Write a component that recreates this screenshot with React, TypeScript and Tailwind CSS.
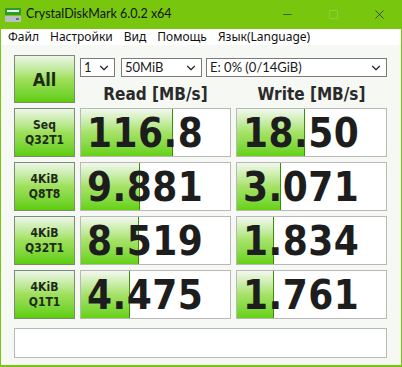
import { ChevronDown, Minus, Square, X } from 'lucide-react'

const rows = [
  { l1: 'Seq', l2: 'Q32T1', read: '116.8', rw: 92, write: '18.50', ww: 68 },
  { l1: '4KiB', l2: 'Q8T8', read: '9.881', rw: 59, write: '3.071', ww: 44 },
  { l1: '4KiB', l2: 'Q32T1', read: '8.519', rw: 58, write: '1.834', ww: 37 },
  { l1: '4KiB', l2: 'Q1T1', read: '4.475', rw: 49, write: '1.761', ww: 37 },
]

const ui = { fontFamily: 'Lato, "Noto Sans", sans-serif' }
const menu = { fontFamily: '"Noto Sans", sans-serif' }
const bold = { fontFamily: '"DejaVu Sans Condensed", "DejaVu Sans", sans-serif' }

function DriveIcon() {
  return (
    <svg width="16" height="16" viewBox="0 0 16 16">
      <rect x="0" y="1" width="16" height="7" fill="#2f9a2f" />
      <rect x="2" y="3" width="12" height="2" fill="#e8f5e0" />
      <rect x="0" y="9" width="16" height="6" fill="#b9bfc4" />
      <rect x="11" y="11" width="3" height="2" fill="#6a7075" />
    </svg>
  )
}

function Select({ value, w }: { value: string; w: string }) {
  return (
    <div className={`${w} h-[19px] bg-white border border-[#7a7a7a] flex items-center justify-between pl-[3px] pr-[3px] text-[13px] text-[#1a1a1a]`} style={ui}>
      <span>{value}</span>
      <ChevronDown size={14} strokeWidth={2} className="text-[#222]" />
    </div>
  )
}

function GreenButton({ children }: { children: React.ReactNode }) {
  return (
    <div className="h-full flex flex-col items-center justify-center border border-[#7d8a76] bg-linear-to-b from-[#eef6e8] via-[#9fe05a] to-[#5ccd00] text-[#1e2a18] font-bold leading-[15px]" style={bold}>
      {children}
    </div>
  )
}

function Cell({ value, width }: { value: string; width: number }) {
  return (
    <div className="relative h-full bg-white border border-[#b8b8b8] overflow-hidden">
      <div
        className="absolute left-0 top-0 bottom-0 border-r border-[#3d8d05] bg-linear-to-b from-[#f2f8ee] via-[#a6e266] to-[#64d20a]"
        style={{ width }}
      />
      <div className="relative h-full flex items-center pl-[6px] text-[40px] font-bold text-[#1d1d1d] tracking-[0.5px]" style={bold}>
        {value}
      </div>
    </div>
  )
}

export default function App() {
  return (
    <div className="w-[402px] h-[367px] bg-[#78c70e] flex flex-col">
      <div className="h-[29px] flex items-center">
        <div className="pl-[5px] pr-[5px]">
          <DriveIcon />
        </div>
        <span className="text-[12.5px] text-[#111]" style={ui}>CrystalDiskMark 6.0.2 x64</span>
        <div className="ml-auto flex items-center">
          <div className="w-[46px] flex justify-center"><Minus size={13} strokeWidth={1.2} className="text-[#222]" /></div>
          <div className="w-[46px] flex justify-center"><Square size={11} strokeWidth={1.2} className="text-[#a4d46a]" /></div>
          <div className="w-[46px] flex justify-center"><X size={15} strokeWidth={1.2} className="text-[#222]" /></div>
        </div>
      </div>
      <div className="mx-[1px] mb-[2px] flex-1 flex flex-col bg-[#f5f8f3]">
        <div className="h-[16px] bg-white flex items-center gap-[11px] pl-[7px] text-[12px] text-[#111]" style={menu}>
          <span>Файл</span>
          <span>Настройки</span>
          <span>Вид</span>
          <span>Помощь</span>
          <span>Язык(Language)</span>
        </div>
        <div className="pl-[13px] pt-[10px] grid grid-cols-[61px_151px_151px] grid-rows-[48px_49px_49px_49px_49px] gap-x-[5px] gap-y-[5px]">
          <GreenButton><span className="text-[18px]">All</span></GreenButton>
          <div className="col-span-2 flex flex-col">
            <div className="flex gap-[6px] pt-[3px]">
              <Select value="1" w="w-[35px]" />
              <Select value="50MiB" w="w-[81px]" />
              <div className="ml-[-2px]">
                <Select value="E: 0% (0/14GiB)" w="w-[181px]" />
              </div>
            </div>
            <div className="flex mt-[5px] text-[17px] font-bold text-[#2a2a2a]" style={bold}>
              <div className="w-[151px] text-center">Read [MB/s]</div>
              <div className="w-[151px] ml-[5px] text-center">Write [MB/s]</div>
            </div>
          </div>
          {rows.map((r, i) => (
            <div key={i} className="contents">
              <GreenButton>
                <span className="text-[12px]">{r.l1}</span>
                <span className="text-[12px]">{r.l2}</span>
              </GreenButton>
              <Cell value={r.read} width={r.rw} />
              <Cell value={r.write} width={r.ww} />
            </div>
          ))}
        </div>
        <div className="ml-[13px] mt-[9px] w-[373px] h-[30px] bg-white border border-[#b8b8b8]" />
      </div>
    </div>
  )
}
